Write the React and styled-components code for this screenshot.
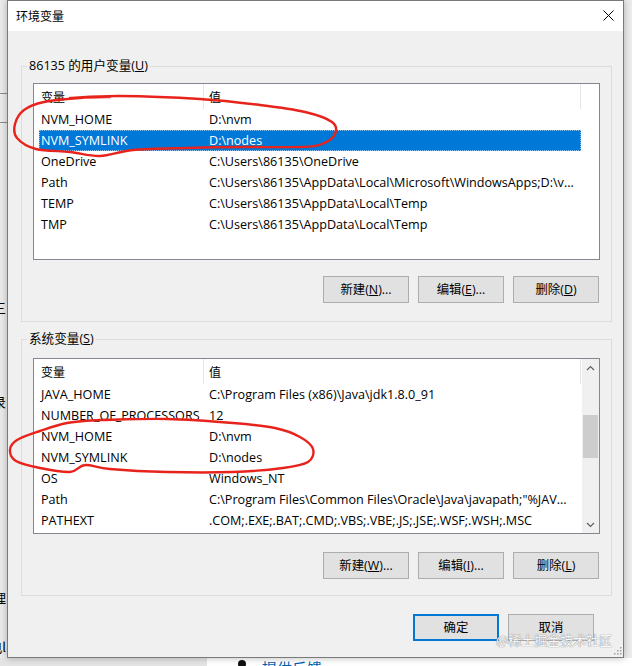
import React from 'react'
import styled, { createGlobalStyle } from 'styled-components'

const FONT = `"Open Sans", "Noto Sans CJK SC", sans-serif`
const CJK = `"Noto Sans CJK SC", sans-serif`

const GlobalStyle = createGlobalStyle`
    *, *::before, *::after { box-sizing: border-box; }
    html, body { margin: 0; padding: 0; }
    body { background: #ececec; font-family: ${FONT}; }
`

const Screen = styled.div`
    position: relative;
    width: 632px;
    height: 666px;
    overflow: hidden;
    display: grid;
    grid-template-columns: 7px 617px 1fr;
    grid-template-rows: 658px 1fr;
    background: #ececec;
    font-family: ${FONT};
    font-size: 12.6px;
    color: #000;
`

const SideStrip = styled.div`
    grid-column: 1;
    grid-row: 1;
    overflow: hidden;
    display: flex;
    flex-direction: column;
    background: #ebebeb;
`

const SideLine = styled.div`
    flex: none;
    height: 1px;
    margin-top: ${p => p.$top}px;
    background: #8c8c8c;
`

const SideText = styled.div`
    flex: none;
    display: flex;
    justify-content: flex-end;
    white-space: nowrap;
    margin-top: ${p => p.$top}px;
    padding-right: 1px;
    font-family: ${CJK};
    font-size: 13px;
    line-height: 16px;
`

const RightStrip = styled.div`
    grid-column: 3;
    grid-row: 1;
    background: #ececec;
`

const BottomStrip = styled.div`
    grid-column: 1 / -1;
    grid-row: 2;
    display: flex;
`

BottomStrip.Gray = styled.div`
    width: 207px;
    background: #e4e4e4;
`

BottomStrip.White = styled.div`
    flex: 1;
    background: #fff;
    display: flex;
    align-items: flex-start;
    padding: 1px 0 0 26px;
    gap: 15px;
    overflow: hidden;
`

BottomStrip.Link = styled.span`
    font-family: ${CJK};
    font-size: 15px;
    line-height: 17px;
    color: #0063b1;
`

const Window = styled.div`
    grid-column: 2;
    grid-row: 1;
    position: relative;
    z-index: 1;
    display: flex;
    flex-direction: column;
    border: 1px solid #7a7a7a;
    background: #f0f0f0;
    box-shadow: 0 0 7px rgba(0, 0, 0, 0.28);
`

const TitleBar = styled.div`
    flex: none;
    height: 30px;
    display: flex;
    align-items: center;
    justify-content: space-between;
    padding: 0 9px 2px 8px;
    background: #fff;
    font-family: ${CJK};
    font-size: 12px;
`

const Body = styled.div`
    flex: 1;
    display: flex;
    flex-direction: column;
    padding: 27px 11px 0 13px;
`

const Group = styled.fieldset`
    margin: ${p => p.$mt}px 0 0;
    padding: 0 0 ${p => p.$pb}px;
    min-width: 0;
    border: 1px solid #dcdcdc;
`

Group.Label = styled.legend`
    margin-left: 5px;
    padding: 0 2px;
    line-height: 16px;
`

Group.Inner = styled.div`
    display: flex;
    flex-direction: column;
    padding: 0 11px;
`

const ListBox = styled.div`
    margin-top: ${p => p.$mt}px;
    height: ${p => p.$h}px;
    display: flex;
    overflow: hidden;
    border: 1px solid #828790;
    background: #fff;
`

ListBox.Main = styled.div`
    flex: 1;
    min-width: 0;
    display: flex;
    flex-direction: column;
`

const HeaderRow = styled.div`
    flex: none;
    height: 25px;
    display: flex;
`

const HeaderCell = styled.div`
    flex: none;
    width: ${p => p.$w}px;
    padding-left: ${p => p.$pl}px;
    display: flex;
    align-items: center;
    border-right: 1px solid #e5e5e5;
    font-family: ${CJK};
    font-size: 12px;
`

const Row = styled.div`
    flex: none;
    width: 542px;
    height: 21px;
    margin-left: 5px;
    display: flex;
    align-items: center;
    line-height: 21px;
    white-space: nowrap;
    background: ${p => (p.$selected ? '#0078d7' : 'transparent')};
    color: ${p => (p.$selected ? '#fff' : '#000')};
    outline: ${p => (p.$selected ? '1px dotted #8cc3ef' : 'none')};
    outline-offset: -1px;
`

Row.Name = styled.div`
    flex: none;
    width: 165px;
    padding-left: 2px;
    overflow: hidden;
`

Row.Value = styled.div`
    flex: none;
    width: 377px;
    padding: 0 4px 0 5px;
    overflow: hidden;
`

const ScrollBar = styled.div`
    flex: none;
    width: 17px;
    display: flex;
    flex-direction: column;
    background: #f0f0f0;
`

ScrollBar.Arrow = styled.div`
    flex: none;
    height: 17px;
    display: flex;
    align-items: center;
    justify-content: center;
`

ScrollBar.Track = styled.div`
    flex: 1;
    padding: 39px 1px 0;
`

ScrollBar.Thumb = styled.div`
    height: 43px;
    background: #cdcdcd;
`

const ButtonRow = styled.div`
    display: flex;
    justify-content: flex-end;
    gap: 9px;
    margin-top: ${p => p.$mt}px;
    padding-right: ${p => p.$pr}px;
`

const Button = styled.button`
    flex: none;
    width: 86px;
    height: 27px;
    padding: 0;
    border: ${p => (p.$primary ? '2px solid #0078d7' : '1px solid #adadad')};
    background: #e1e1e1;
    color: #000;
    font-family: ${FONT};
    font-size: 12.4px;
    line-height: 16px;
`

const Watermark = styled.div`
    position: absolute;
    left: 496px;
    top: 632px;
    z-index: 3;
    font-family: ${CJK};
    font-size: 13px;
    line-height: 16px;
    color: #f8f8f8;
    text-shadow: 0 0 1px #8a8a8a, 0 0 1px #8a8a8a;
    pointer-events: none;
`

const Grip = styled.svg`
    position: absolute;
    left: 613px;
    top: 646px;
    z-index: 2;
`

const Annotation = styled.svg`
    position: absolute;
    inset: 0;
    z-index: 4;
    pointer-events: none;
`

const userVars = [
    { name: 'NVM_HOME', value: 'D:\\nvm' },
    { name: 'NVM_SYMLINK', value: 'D:\\nodes', selected: true },
    { name: 'OneDrive', value: 'C:\\Users\\86135\\OneDrive' },
    { name: 'Path', value: 'C:\\Users\\86135\\AppData\\Local\\Microsoft\\WindowsApps;D:\\v...' },
    { name: 'TEMP', value: 'C:\\Users\\86135\\AppData\\Local\\Temp' },
    { name: 'TMP', value: 'C:\\Users\\86135\\AppData\\Local\\Temp' },
]

const systemVars = [
    { name: 'JAVA_HOME', value: 'C:\\Program Files (x86)\\Java\\jdk1.8.0_91' },
    { name: 'NUMBER_OF_PROCESSORS', value: '12' },
    { name: 'NVM_HOME', value: 'D:\\nvm' },
    { name: 'NVM_SYMLINK', value: 'D:\\nodes' },
    { name: 'OS', value: 'Windows_NT' },
    { name: 'Path', value: 'C:\\Program Files\\Common Files\\Oracle\\Java\\javapath;"%JAV...' },
    { name: 'PATHEXT', value: '.COM;.EXE;.BAT;.CMD;.VBS;.VBE;.JS;.JSE;.WSF;.WSH;.MSC' },
]

// hand-drawn red marks, smoothed through a few traced points
const userMark = [
    [70, 98], [120, 96], [200, 99], [260, 105], [305, 112], [332, 122], [335, 134], [322, 144],
    [300, 147], [240, 147], [187, 148], [133, 150], [100, 156], [70, 152], [36, 149], [17, 138],
    [15, 124], [24, 110], [44, 102], [80, 98], [110, 97],
]

const systemMark = [
    [100, 420], [167, 419], [233, 423], [275, 428], [300, 437], [313, 449], [308, 462], [283, 468],
    [233, 472], [167, 472], [110, 469], [85, 465], [70, 472], [40, 468], [16, 461], [10, 450],
    [17, 440], [40, 431], [67, 423], [100, 420], [135, 419],
]

const smoothPath = pts => {
    let d = `M${pts[0][0]},${pts[0][1]}`
    for (let i = 0; i < pts.length - 1; i++) {
        const p0 = pts[i - 1] || pts[i]
        const p1 = pts[i]
        const p2 = pts[i + 1]
        const p3 = pts[i + 2] || p2
        const c1 = [p1[0] + (p2[0] - p0[0]) / 6, p1[1] + (p2[1] - p0[1]) / 6]
        const c2 = [p2[0] - (p3[0] - p1[0]) / 6, p2[1] - (p3[1] - p1[1]) / 6]
        d += ` C${c1[0]},${c1[1]} ${c2[0]},${c2[1]} ${p2[0]},${p2[1]}`
    }
    return d
}

const Chevron = ({ up }) => (
    <svg width="9" height="6" viewBox="0 0 9 6">
        <path d={up ? 'M1 5 L4.5 1.5 L8 5' : 'M1 1 L4.5 4.5 L8 1'} fill="none" stroke="#606060" strokeWidth="1.2" />
    </svg>
)

const VarList = ({ vars, mt, h, scroll }) => (
    <ListBox $mt={mt} $h={h}>
        <ListBox.Main>
            <HeaderRow>
                <HeaderCell $w={170} $pl={7}>变量</HeaderCell>
                <HeaderCell $w={377} $pl={5}>值</HeaderCell>
            </HeaderRow>
            {vars.map(v => (
                <Row key={v.name + v.value} $selected={v.selected}>
                    <Row.Name>{v.name}</Row.Name>
                    <Row.Value>{v.value}</Row.Value>
                </Row>
            ))}
        </ListBox.Main>
        {scroll && (
            <ScrollBar>
                <ScrollBar.Arrow><Chevron up /></ScrollBar.Arrow>
                <ScrollBar.Track><ScrollBar.Thumb /></ScrollBar.Track>
                <ScrollBar.Arrow><Chevron /></ScrollBar.Arrow>
            </ScrollBar>
        )}
    </ListBox>
)

const Actions = ({ keys, mt }) => (
    <ButtonRow $mt={mt} $pr={1}>
        <Button>新建(<u>{keys[0]}</u>)...</Button>
        <Button>编辑(<u>{keys[1]}</u>)...</Button>
        <Button>删除(<u>{keys[2]}</u>)</Button>
    </ButtonRow>
)

const App = () => {
    return (
        <Screen>
            <GlobalStyle />
            <SideStrip>
                <SideLine $top={93} />
                <SideLine $top={28} />
                <SideText $top={177}>三</SideText>
                <SideText $top={78}>录</SideText>
                <SideText $top={180}>理</SideText>
                <SideText $top={33}>电l</SideText>
            </SideStrip>

            <Window>
                <TitleBar>
                    <span>环境变量</span>
                    <svg width="11" height="11" viewBox="0 0 11 11">
                        <path d="M0.5 0.5 L10.5 10.5 M10.5 0.5 L0.5 10.5" stroke="#000" strokeWidth="1" />
                    </svg>
                </TitleBar>
                <Body>
                    <Group $mt={0} $pb={18}>
                        <Group.Label>86135 的用户变量(<u>U</u>)</Group.Label>
                        <Group.Inner>
                            <VarList vars={userVars} mt={9} h={177} />
                            <Actions keys={['N', 'E', 'D']} mt={16} />
                        </Group.Inner>
                    </Group>

                    <Group $mt={9} $pb={16}>
                        <Group.Label>系统变量(<u>S</u>)</Group.Label>
                        <Group.Inner>
                            <VarList vars={systemVars} mt={11} h={176} scroll />
                            <Actions keys={['W', 'I', 'L']} mt={18} />
                        </Group.Inner>
                    </Group>

                    <ButtonRow $mt={18} $pr={18}>
                        <Button $primary>确定</Button>
                        <Button>取消</Button>
                    </ButtonRow>
                </Body>
            </Window>

            <RightStrip />

            <BottomStrip>
                <BottomStrip.Gray />
                <BottomStrip.White>
                    <svg width="14" height="14" viewBox="0 0 14 14">
                        <circle cx="9" cy="5" r="4" fill="#111" />
                        <path d="M1 14 L1 8 L6 8 L6 14 Z" fill="#111" />
                    </svg>
                    <BottomStrip.Link>提供反馈</BottomStrip.Link>
                </BottomStrip.White>
            </BottomStrip>

            <Grip width="9" height="9" viewBox="0 0 9 9">
                {[[7, 1], [4, 4], [7, 4], [1, 7], [4, 7], [7, 7]].map(([x, y]) => (
                    <rect key={x + '-' + y} x={x} y={y} width="1.5" height="1.5" fill="#a0a0a0" />
                ))}
            </Grip>

            <Watermark>@稀土掘金技术社区</Watermark>

            <Annotation width="632" height="666" viewBox="0 0 632 666">
                <path d={smoothPath(userMark)} fill="none" stroke="#e8231b" strokeWidth="2.4" strokeLinecap="round" strokeLinejoin="round" />
                <path d={smoothPath(systemMark)} fill="none" stroke="#e8231b" strokeWidth="2.4" strokeLinecap="round" strokeLinejoin="round" />
            </Annotation>
        </Screen>
    )
}

export default App
